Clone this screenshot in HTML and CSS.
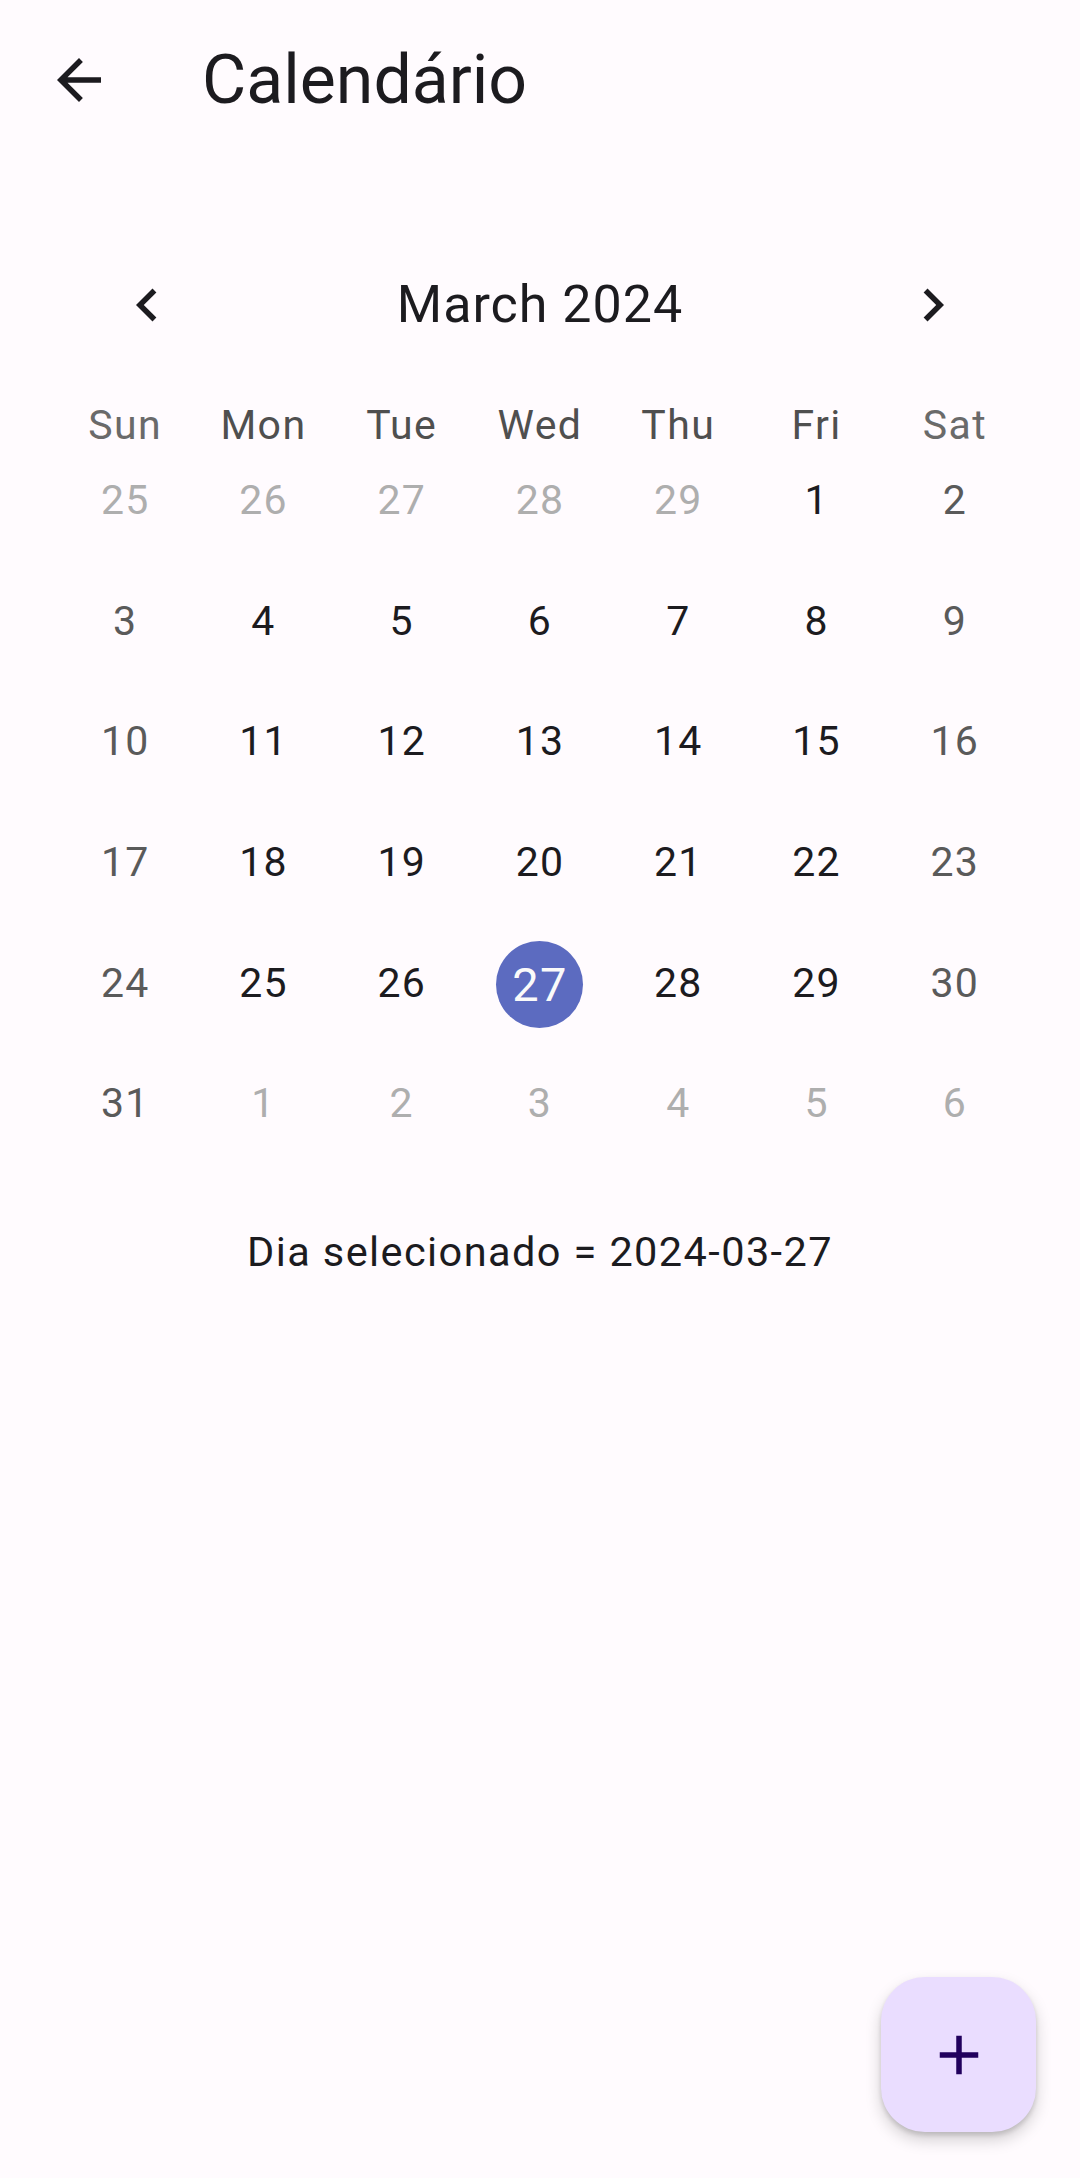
FILE: index.html
```html
<!DOCTYPE html>
<html lang="pt">
<head>
<meta charset="utf-8">
<title>Calendário</title>
<link rel="stylesheet" href="styles.css">
</head>
<body>
<header class="appbar">
  <button class="icon-btn back" aria-label="Voltar">
    <svg viewBox="0 0 24 24" width="66" height="66"><path d="M20 11H7.83l5.59-5.59L12 4l-8 8 8 8 1.41-1.41L7.83 13H20v-2z" fill="#1C1B1F"/></svg>
  </button>
  <h1 class="appbar-title">Calendário</h1>
</header>

<main class="content">
  <section class="calendar">
    <div class="cal-header">
      <button class="icon-btn chevron" aria-label="Mês anterior">
        <svg viewBox="0 0 24 24" width="66" height="66"><path d="M15.41 7.41L14 6l-6 6 6 6 1.41-1.41L10.83 12z" fill="#1C1B1F"/></svg>
      </button>
      <div class="cal-title">March 2024</div>
      <button class="icon-btn chevron" aria-label="Próximo mês">
        <svg viewBox="0 0 24 24" width="66" height="66"><path d="M10 6L8.59 7.41 13.17 12l-4.58 4.59L10 18l6-6z" fill="#1C1B1F"/></svg>
      </button>
    </div>

    <div class="weekdays">
      <span class="wd weekend">Sun</span>
      <span class="wd">Mon</span>
      <span class="wd">Tue</span>
      <span class="wd">Wed</span>
      <span class="wd">Thu</span>
      <span class="wd">Fri</span>
      <span class="wd weekend">Sat</span>
    </div>

    <div class="days">
      <div class="day outside">25</div>
      <div class="day outside">26</div>
      <div class="day outside">27</div>
      <div class="day outside">28</div>
      <div class="day outside">29</div>
      <div class="day">1</div>
      <div class="day weekend">2</div>

      <div class="day weekend">3</div>
      <div class="day">4</div>
      <div class="day">5</div>
      <div class="day">6</div>
      <div class="day">7</div>
      <div class="day">8</div>
      <div class="day weekend">9</div>

      <div class="day weekend">10</div>
      <div class="day">11</div>
      <div class="day">12</div>
      <div class="day">13</div>
      <div class="day">14</div>
      <div class="day">15</div>
      <div class="day weekend">16</div>

      <div class="day weekend">17</div>
      <div class="day">18</div>
      <div class="day">19</div>
      <div class="day">20</div>
      <div class="day">21</div>
      <div class="day">22</div>
      <div class="day weekend">23</div>

      <div class="day weekend">24</div>
      <div class="day">25</div>
      <div class="day">26</div>
      <div class="day selected"><span class="sel-circle">27</span></div>
      <div class="day">28</div>
      <div class="day">29</div>
      <div class="day weekend">30</div>

      <div class="day weekend">31</div>
      <div class="day outside">1</div>
      <div class="day outside">2</div>
      <div class="day outside">3</div>
      <div class="day outside">4</div>
      <div class="day outside">5</div>
      <div class="day outside">6</div>
    </div>
  </section>

  <p class="selected-label">Dia selecionado = 2024-03-27</p>
</main>

<button class="fab" aria-label="Adicionar">
  <svg viewBox="0 0 24 24" width="66" height="66"><path d="M19 13h-6v6h-2v-6H5v-2h6V5h2v6h6v2z" fill="#21005D"/></svg>
</button>
</body>
</html>
```

FILE: styles.css
```css
html, body {
  margin: 0;
  padding: 0;
  background: #FFFBFE;
}

body {
  width: 1080px;
  min-height: 2178px;
  font-family: Roboto, "Noto Sans", "Liberation Sans", sans-serif;
  color: #1C1B1F;
}

.icon-btn {
  border: 0;
  background: transparent;
  padding: 0;
  margin: 0;
  width: 66px;
  height: 66px;
  display: flex;
  align-items: center;
  justify-content: center;
}

.icon-btn svg {
  display: block;
}

/* App bar */
.appbar {
  height: 160px;
  display: flex;
  align-items: center;
  padding-left: 46px;
  box-sizing: border-box;
}

.appbar-title {
  margin: 0 0 0 90px;
  font-size: 68px;
  font-weight: 400;
  line-height: 1;
  color: #1C1B1F;
  letter-spacing: 0;
}

/* Calendar */
.content {
  padding: 0 56px;
}

.calendar {
  margin-top: 96px;
}

.cal-header {
  height: 97px;
  display: flex;
  align-items: center;
  justify-content: space-between;
  padding: 0 58px;
}

.cal-title {
  font-size: 52px;
  line-height: 1;
  letter-spacing: 1px;
  color: #1C1B1F;
}

.weekdays {
  margin-top: 57px;
  height: 30px;
  display: grid;
  grid-template-columns: repeat(7, 1fr);
  align-items: center;
}

.wd {
  text-align: center;
  font-size: 41px;
  line-height: 30px;
  letter-spacing: 1.4px;
  color: #4F4F4F;
}

.wd.weekend {
  color: #6A6A6A;
}

.days {
  display: grid;
  grid-template-columns: repeat(7, 1fr);
  grid-auto-rows: 120.6px;
}

.day {
  display: flex;
  align-items: center;
  justify-content: center;
  font-size: 41px;
  letter-spacing: 1.2px;
  color: #1C1B1F;
}

.day.weekend {
  color: #5A5A5A;
}

.day.outside {
  color: #AEAEAE;
}

.sel-circle {
  width: 87px;
  height: 87px;
  border-radius: 50%;
  background: #5C6BC0;
  color: #FAFAFA;
  font-size: 47px;
  display: flex;
  align-items: center;
  justify-content: center;
  margin-top: 3px;
}

.selected-label {
  margin: 64px 0 0;
  text-align: center;
  font-size: 41.5px;
  line-height: 48px;
  letter-spacing: 1.4px;
  color: #1C1B1F;
}

/* Floating action button */
.fab {
  position: fixed;
  right: 44px;
  bottom: 46px;
  width: 155px;
  height: 155px;
  border: 0;
  border-radius: 44px;
  background: #EADDFF;
  display: flex;
  align-items: center;
  justify-content: center;
  padding: 0;
  box-shadow: 0 8px 16px rgba(0, 0, 0, 0.18), 0 3px 5px rgba(0, 0, 0, 0.14);
}

.fab svg {
  display: block;
}
```
